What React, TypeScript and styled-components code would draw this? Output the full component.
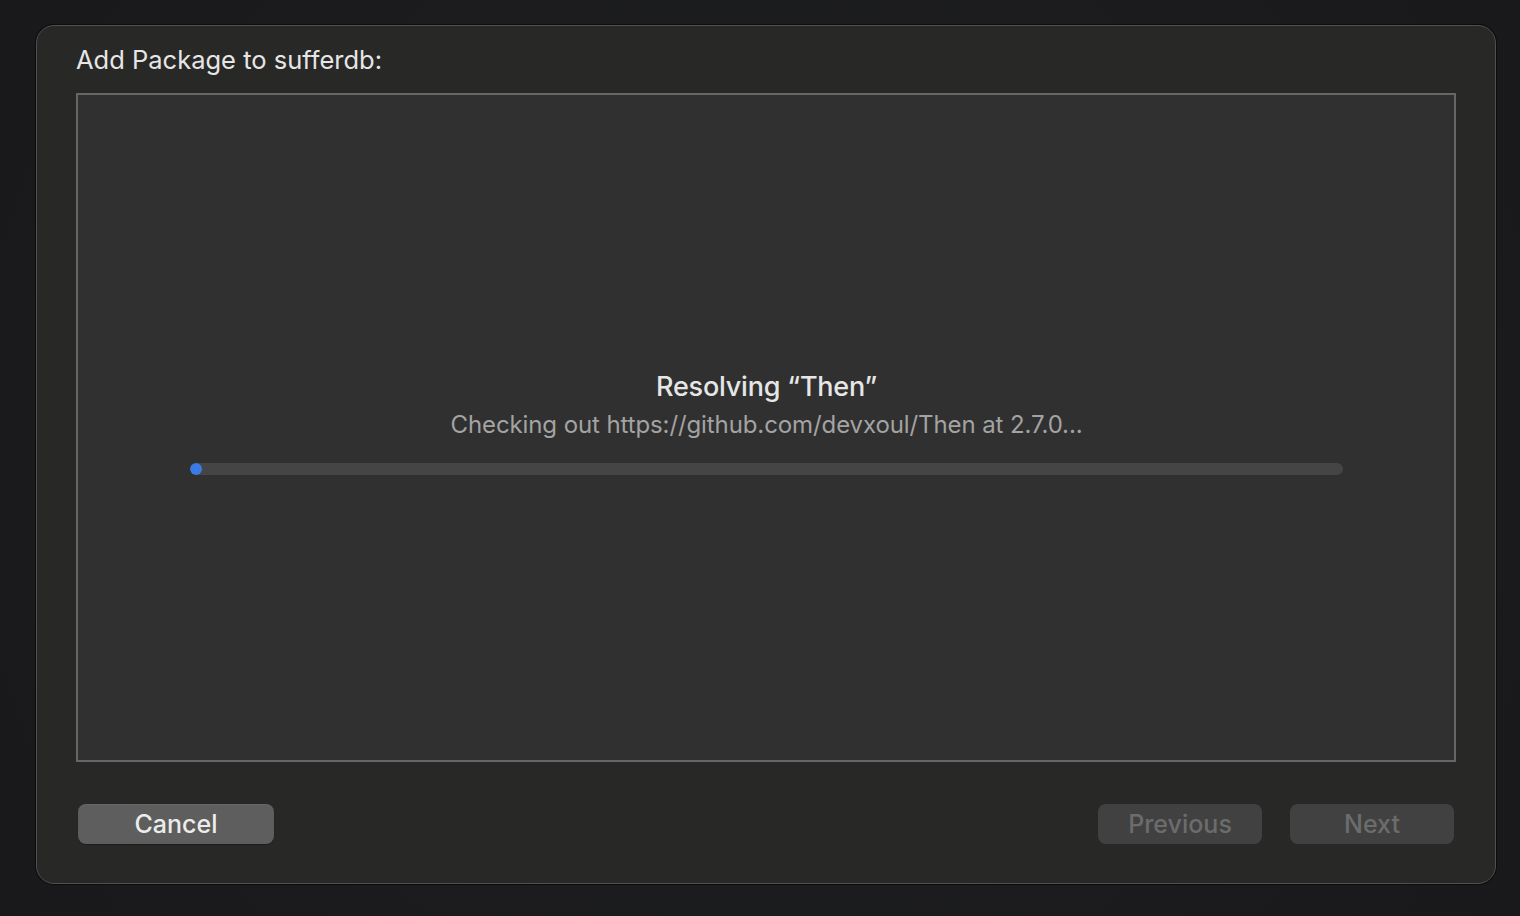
import React from "react";
import styled, { createGlobalStyle } from "styled-components";

const Global = createGlobalStyle`
  html, body { margin: 0; padding: 0; background: #1b1c1e; }
  body { font-family: Inter, "Noto Sans", sans-serif; -webkit-font-smoothing: antialiased; }
  #root { width: 1520px; height: 916px; }
`;

const Page = styled.div`
  width: 1520px;
  height: 916px;
  box-sizing: border-box;
  padding: 25px 24px 32px 36px;
  display: flex;
  background: radial-gradient(circle at 50% 50%, #1e1f21 0%, #19191b 100%);
`;

const Sheet = styled.div`
  flex: 1;
  box-sizing: border-box;
  background: #282827;
  border: 1px solid #505050;
  border-radius: 18px;
  box-shadow: 0 0 0 1px #0c0c0c;
  padding: 18px 39px 39px 39px;
  display: flex;
  flex-direction: column;
`;

const Title = styled.h1`
  margin: 0 0 17px 0;
  font-size: 25.5px;
  font-weight: 400;
  color: #e6e6e6;
  line-height: 32px;
  letter-spacing: 0;
`;

const ContentBox = styled.div`
  flex: 1;
  box-sizing: border-box;
  background: #303030;
  border: 2px solid #666666;
  display: flex;
  flex-direction: column;
  align-items: center;
  justify-content: center;
  padding: 0 111px 10px 112px;
`;

const Heading = styled.div`
  font-size: 27px;
  font-weight: 500;
  color: #e6e6e6;
  line-height: 34px;
  letter-spacing: -0.2px;
`;

const Detail = styled.div`
  font-size: 24px;
  font-weight: 400;
  color: #a3a3a3;
  line-height: 30px;
  margin-top: 6px;
  letter-spacing: -0.1px;
`;

const Track = styled.div`
  align-self: stretch;
  height: 12px;
  border-radius: 6px;
  background: #454545;
  margin-top: 23px;
  overflow: hidden;
`;

const Fill = styled.div`
  height: 100%;
  border-radius: 6px;
  background: #3a7be6;
`;

const Footer = styled.div`
  display: flex;
  align-items: center;
  margin-top: 42px;
  padding: 0 2px 0 2px;
`;

const Spacer = styled.div`
  flex: 1;
`;

const Button = styled.button<{ $disabled?: boolean; $w: number }>`
  width: ${(p) => p.$w}px;
  height: 40px;
  border: none;
  border-radius: 8px;
  font-family: inherit;
  font-size: 25px;
  font-weight: 500;
  padding: 0;
  background: ${(p) => (p.$disabled ? "#414141" : "#5e5e5e")};
  color: ${(p) => (p.$disabled ? "#6c6c6c" : "#ececec")};
  box-shadow: ${(p) => (p.$disabled ? "none" : "0 1px 1px rgba(0,0,0,0.3), inset 0 1px 0 rgba(255,255,255,0.06)")};
  display: flex;
  align-items: center;
  justify-content: center;
`;

const ButtonGroup = styled.div`
  display: flex;
  gap: 28px;
`;

export default function App() {
  const progress = 12;
  return (
    <>
      <Global />
      <Page>
        <Sheet>
          <Title>Add Package to sufferdb:</Title>
          <ContentBox>
            <Heading>Resolving “Then”</Heading>
            <Detail>Checking out https://github.com/devxoul/Then at 2.7.0...</Detail>
            <Track>
              <Fill style={{ width: `${progress}px` }} />
            </Track>
          </ContentBox>
          <Footer>
            <Button $w={196}>Cancel</Button>
            <Spacer />
            <ButtonGroup>
              <Button $w={164} $disabled>Previous</Button>
              <Button $w={164} $disabled>Next</Button>
            </ButtonGroup>
          </Footer>
        </Sheet>
      </Page>
    </>
  );
}
